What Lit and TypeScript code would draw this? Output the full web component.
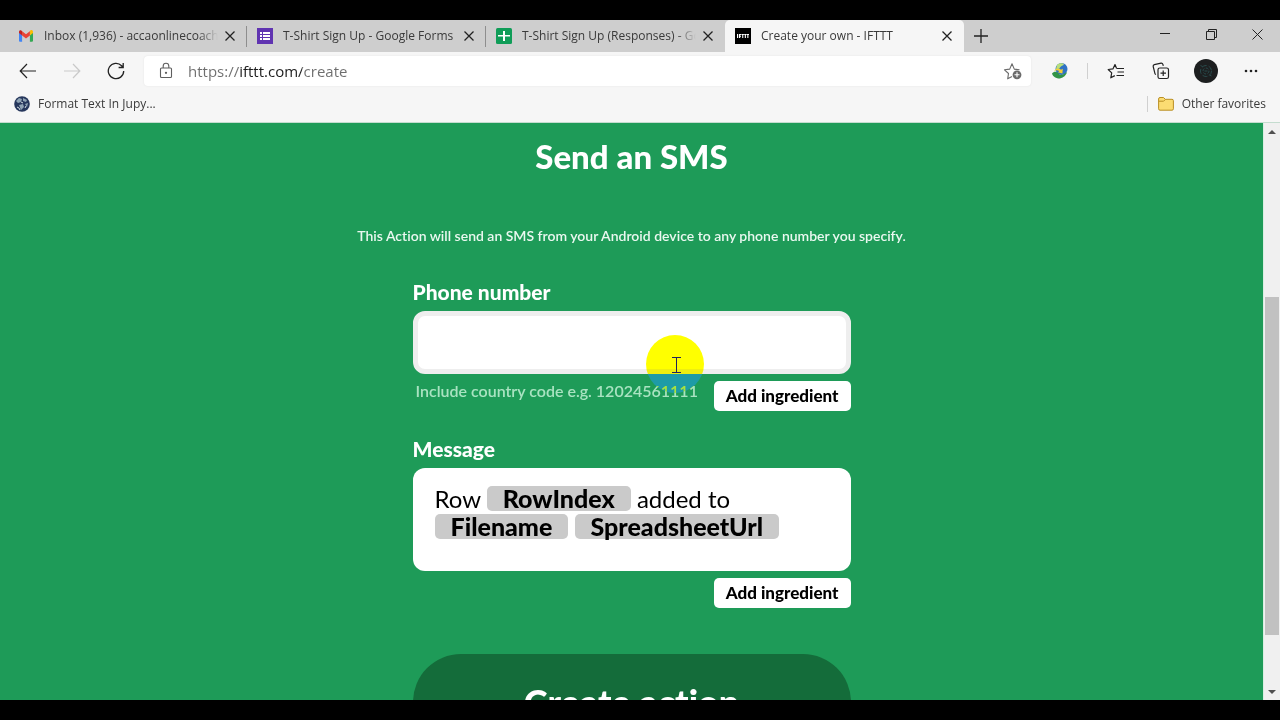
import { LitElement, html, css, svg } from "lit";
import { customElement, property } from "lit/decorators.js";

const closeIcon = html`<svg width="12" height="12" viewBox="0 0 12 12" aria-hidden="true">
  <path d="M1.5 1.5l9 9M10.5 1.5l-9 9" fill="none" stroke="currentColor" stroke-width="1.3" />
</svg>`;

const favicons: Record<string, unknown> = {
  gmail: svg`<path d="M1 3.2v9.6c0 .5.4.9.9.9h2.2V7.4z" fill="#4285f4"/>
    <path d="M15 3.2v9.6c0 .5-.4.9-.9.9h-2.2V7.4z" fill="#34a853"/>
    <path d="M11.9 3.2v4.2L15 5V3.8c0-1.6-1.7-2.2-2.7-1.4z" fill="#fbbc04"/>
    <path d="M4.1 7.4V3.2L8 6.2l3.9-3v4.2L8 10.4z" fill="#ea4335"/>
    <path d="M1 3.8V5l3.1 2.4V3.2l-.8-.7C2.4 1.8 1 2.3 1 3.8z" fill="#c5221f"/>`,
  forms: svg`<path d="M0 0h16v16H0z" fill="#6034b1"/>
    <path d="M3 4h2v2H3zM6 4h7v2H6zM3 7h2v2H3zM6 7h7v2H6zM3 10h2v2H3zM6 10h7v2H6z" fill="#fff"/>`,
  sheets: svg`<rect width="16" height="16" rx="1.5" fill="#109d58"/>
    <path d="M7 3h2v4h5v1.5H9V13H7V8.5H2V7h5z" fill="#fff"/>`,
  ifttt: svg`<path d="M0 0h16v16H0z" fill="#000"/>
    <path d="M2 6h1.2v4H2zM4 6h2.2v1H5.2v.8h.8v.9h-.8V10H4zM6.6 6h2.3v1H8.3v3H7.2V7h-.6zM9.2 6h2.2v1h-.5v3H9.8V7h-.6zM11.7 6H14v1h-.6v3h-1.1V7h-.6z" fill="#fff"/>`,
};

@customElement("browser-tab")
class BrowserTab extends LitElement {
  @property() icon = "";
  @property() label = "";
  @property({ type: Boolean, reflect: true }) active = false;
  @property({ type: Boolean, reflect: true }) faded = false;

  static styles = css`
    :host {
      display: flex;
      flex: 0 1 239px;
      min-width: 0;
      box-sizing: border-box;
      align-items: center;
      padding: 0 8px 0 10px;
      color: #3a3a3a;
      border-right: 1px solid transparent;
    }
    :host([active]) {
      background: #f6f6f6;
      border-radius: 5px 5px 0 0;
    }
    .favicon {
      flex: none;
      margin-right: 10px;
    }
    .title {
      flex: 1;
      min-width: 0;
      overflow: hidden;
      white-space: nowrap;
      font-size: 12px;
      line-height: 20px;
    }
    :host([faded]) .title {
      mask-image: linear-gradient(to right, #000 calc(100% - 20px), transparent);
    }
    .close {
      flex: none;
      display: grid;
      place-items: center;
      width: 16px;
      height: 16px;
      margin-left: 4px;
      padding: 0;
      border: 0;
      background: none;
      color: #222;
    }
  `;

  render() {
    return html`
      <svg class="favicon" width="16" height="16" viewBox="0 0 16 16" aria-hidden="true">${favicons[this.icon]}</svg>
      <span class="title">${this.label}</span>
      <button class="close" aria-label="Close tab">${closeIcon}</button>
    `;
  }
}

@customElement("browser-chrome")
class BrowserChrome extends LitElement {
  static styles = css`
    :host {
      display: block;
      flex: none;
      background: #f6f6f6;
      font-family: "Open Sans", "Noto Sans", sans-serif;
      border-bottom: 1px solid #c4dccf;
    }
    button {
      padding: 0;
      border: 0;
      background: none;
      color: #222;
      display: grid;
      place-items: center;
    }
    .tabs {
      display: flex;
      height: 32px;
      padding-left: 8px;
      background: #cecece;
    }
    .divided {
      border-image: linear-gradient(transparent 20%, #8e8e8e 20%, #8e8e8e 82%, transparent 82%) 1;
    }
    .new-tab {
      width: 34px;
    }
    .window {
      display: flex;
      margin-left: auto;
    }
    .window button {
      width: 46px;
      height: 28px;
    }
    .toolbar {
      display: flex;
      align-items: center;
      height: 38px;
      padding: 0 7px 0 6px;
    }
    .tool {
      flex: none;
      width: 44px;
      height: 32px;
    }
    .faded {
      color: #c9c9c9;
    }
    .address {
      flex: 1;
      min-width: 0;
      display: flex;
      align-items: center;
      height: 30px;
      margin: 0 7px 0 6px;
      padding: 0 8px 0 14px;
      background: #fff;
      border-radius: 4px;
      box-shadow: 0 0 2px #e2e2e2;
      box-sizing: border-box;
    }
    .url {
      flex: 1;
      min-width: 0;
      margin: 0 0 0 14px;
      padding: 0;
      border: 0;
      outline: 0;
      font: 15px/24px "Open Sans", "Noto Sans", sans-serif;
      color: transparent;
      background: linear-gradient(to right, #6d6d6d 51px, #1c1c1c 51px, #1c1c1c 114px, #6d6d6d 114px);
      background-clip: text;
      -webkit-background-clip: text;
    }
    .right {
      display: flex;
      align-items: center;
      gap: 1px;
    }
    .rule {
      width: 1px;
      height: 16px;
      background: #d0d0d0;
    }
    .right .rule {
      margin: 0 5px 0 4px;
    }
    .favorites {
      display: flex;
      align-items: center;
      justify-content: space-between;
      height: 28px;
      padding: 0 14px 4px;
    }
    .favorites a {
      display: flex;
      align-items: center;
      gap: 8px;
      color: #3a3a3a;
      text-decoration: none;
      font-size: 12px;
      line-height: 20px;
    }
    .other {
      display: flex;
      align-items: center;
      gap: 10px;
    }
  `;

  render() {
    return html`
      <nav class="tabs" aria-label="Tabs">
        <browser-tab class="divided" icon="gmail" label="Inbox (1,936) - accaonlinecoachi" faded></browser-tab>
        <browser-tab class="divided" icon="forms" label="T-Shirt Sign Up - Google Forms"></browser-tab>
        <browser-tab icon="sheets" label="T-Shirt Sign Up (Responses) - Go" faded></browser-tab>
        <browser-tab icon="ifttt" label="Create your own - IFTTT" active></browser-tab>
        <button class="new-tab" aria-label="New tab">
          <svg width="14" height="14" viewBox="0 0 14 14"><path d="M7 0v14M0 7h14" stroke="currentColor" stroke-width="1.3" /></svg>
        </button>
        <div class="window">
          <button aria-label="Minimize">
            <svg width="10" height="10" viewBox="0 0 10 10"><path d="M0 4.5h10" stroke="currentColor" /></svg>
          </button>
          <button aria-label="Restore">
            <svg width="11" height="11" viewBox="0 0 11 11" fill="none" stroke="currentColor"><path d="M.5 2.5h8v8h-8zM2.5 2.5v-2h8v8h-2" /></svg>
          </button>
          <button aria-label="Close window">
            <svg width="11" height="11" viewBox="0 0 11 11"><path d="M.5.5l10 10M10.5.5l-10 10" stroke="currentColor" /></svg>
          </button>
        </div>
      </nav>
      <div class="toolbar">
        <button class="tool" aria-label="Back">
          <svg width="18" height="16" viewBox="0 0 18 16" fill="none" stroke="currentColor" stroke-width="1.2"><path d="M17 8H1.5M8 1L1.2 8 8 15" /></svg>
        </button>
        <button class="tool faded" aria-label="Forward">
          <svg width="18" height="16" viewBox="0 0 18 16" fill="none" stroke="currentColor" stroke-width="1.2"><path d="M1 8h15.5M10 1l6.8 7L10 15" /></svg>
        </button>
        <button class="tool" aria-label="Refresh">
          <svg width="18" height="18" viewBox="0 0 18 18" fill="none" stroke="currentColor" stroke-width="1.3"><path d="M16.7 9A7.7 7.7 0 1 1 14.6 3.7L16 5.3M16.2 1v4.5h-4.6" /></svg>
        </button>
        <div class="address">
          <svg width="16" height="18" viewBox="0 0 16 18" fill="none" stroke="#5f5f5f" stroke-width="1.1" aria-hidden="true">
            <rect x="2.5" y="6" width="11" height="9.5" rx="1" />
            <path d="M5.2 6V4a2.8 2.8 0 0 1 5.6 0v2" />
            <circle cx="8" cy="10.8" r=".6" fill="#5f5f5f" />
          </svg>
          <input class="url" type="text" aria-label="Address" value="https://ifttt.com/create" />
          <button aria-label="Add to favorites">
            <svg width="20" height="18" viewBox="0 0 20 18" fill="none" stroke="#6a6a6a" stroke-width="1.1">
              <path d="M9 14.5l-4.3 2.3.8-5.3L1.5 7.8l5.2-.7L9 1.8l2.3 5.3 5.2.7" stroke-linejoin="round" />
              <circle cx="14" cy="12.8" r="4.4" fill="#6a6a6a" stroke="none" />
              <path d="M14 10.3v5M11.5 12.8h5" stroke="#fff" />
            </svg>
          </button>
        </div>
        <div class="right">
          <button class="tool" aria-label="Download manager">
            <svg width="18" height="18" viewBox="0 0 18 18">
              <circle cx="10.5" cy="7" r="6" fill="#2f73c4" />
              <path d="M6 3c2-2.5 6-2 7-.8-1 1.6-3 1.6-4 3.2S7 7.5 5 6.8z" fill="#b9df7a" />
              <path d="M1 11.5c2-2.5 5-2 6.5 0 1.5 2 4 2 8.5-1.5-1 4-4 5.5-7 6.5C5 16.5 2 15 1 11.5z" fill="#329447" />
              <path d="M3 9c2-3 5-3.2 7-1.2l1.8-1-.4 4.7-4.6-1.2 1.5-1C7 8 5 8 3 9z" fill="#f4cf35" />
            </svg>
          </button>
          <span class="rule"></span>
          <button class="tool" aria-label="Favorites">
            <svg width="18" height="18" viewBox="0 0 18 18" fill="none" stroke="currentColor" stroke-width="1.2">
              <path d="M9.5 6.2L8 2.5 5.9 6.9 1.2 7.5l3.5 3.4-.9 4.9 4-2.2M9.5 6.5h7.5M10.5 10h6.5M9.5 13.5h7.5" stroke-linejoin="round" />
            </svg>
          </button>
          <button class="tool" aria-label="Collections">
            <svg width="18" height="18" viewBox="0 0 18 18" fill="none" stroke="currentColor" stroke-width="1.2">
              <rect x="6" y="6" width="10.5" height="10.5" rx="1.8" />
              <path d="M11.2 8.5v5.5M8.5 11.2H14M3.8 12.6L3 11.8 1.2 4.5c-.2-1 .2-1.6 1.1-1.9l6.8-1.4c.9-.1 1.5.3 1.8 1.2l.4 1.4" />
            </svg>
          </button>
          <button class="tool" aria-label="Profile">
            <svg width="24" height="24" viewBox="0 0 24 24" fill="none" stroke="#2b5557" stroke-width=".8">
              <circle cx="12" cy="12" r="12" fill="#1d1f20" stroke="none" />
              <circle cx="12" cy="12" r="5.5" stroke-dasharray="5 2" />
              <circle cx="12" cy="12" r="3" stroke-dasharray="3 1.5" />
              <path d="M6.5 6.5l2 1M17.5 17l-2-1M10.5 12h3" />
            </svg>
          </button>
          <button class="tool" aria-label="Settings and more">
            <svg width="14" height="4" viewBox="0 0 14 4" fill="currentColor"><circle cx="2" cy="2" r="1.3" /><circle cx="7" cy="2" r="1.3" /><circle cx="12" cy="2" r="1.3" /></svg>
          </button>
        </div>
      </div>
      <div class="favorites">
        <a href="#">
          <svg width="16" height="16" viewBox="0 0 16 16" aria-hidden="true">
            <circle cx="8" cy="8" r="7.8" fill="#26375c" />
            <path d="M2 5l3-3 3 1-1 3-3 1zM9 2l4 2-1 2-3-1zM5 9l4-1 1 3-3 3zM11 8l3-1-1 4z" fill="#8fa3b4" />
            <path d="M3 11l2 1 1 2M7 6l2 1M11 12l1-2" stroke="#d5dde2" fill="none" />
          </svg>
          Format Text In Jupy...
        </a>
        <div class="other">
          <span class="rule"></span>
          <a href="#">
            <svg width="16" height="16" viewBox="0 0 16 16" aria-hidden="true">
              <path d="M.6 3Q.6 1.5 2 1.5h3.5l1.8 1.8H14q1.400 0 1.400 1.400v8.100q0 1.400-1.400 1.400H2q-1.400 0-1.400-1.400z" fill="#fbdc72" stroke="#b98f24" />
              <path d="M.8 5.2h4.8l1.800-1.800" fill="none" stroke="#b98f24" />
            </svg>
            Other favorites
          </a>
        </div>
      </div>
    `;
  }
}

@customElement("page-scrollbar")
class PageScrollbar extends LitElement {
  static styles = css`
    :host {
      flex: none;
      display: flex;
      flex-direction: column;
      box-sizing: border-box;
      width: 17px;
      padding: 0 1px;
      border-left: 1px solid #d9eee2;
      background: #f0f0f0;
    }
    .arrow {
      flex: none;
      display: grid;
      place-items: center;
      height: 17px;
      padding: 0;
      border: 0;
      background: none;
    }
    .before {
      flex: 157;
    }
    .thumb {
      flex: 338;
      background: #c1c1c1;
    }
    .after {
      flex: 48;
    }
  `;

  render() {
    return html`
      <button class="arrow" aria-label="Scroll up">
        <svg width="8" height="4" viewBox="0 0 8 4"><path d="M0 4l4-4 4 4z" fill="#505050" /></svg>
      </button>
      <span class="before"></span>
      <span class="thumb"></span>
      <span class="after"></span>
      <button class="arrow" aria-label="Scroll down">
        <svg width="8" height="4" viewBox="0 0 8 4"><path d="M0 0l4 4 4-4z" fill="#505050" /></svg>
      </button>
    `;
  }
}

@customElement("app-root")
class AppRoot extends LitElement {
  static styles = css`
    :host {
      display: flex;
      flex-direction: column;
      box-sizing: border-box;
      height: 100vh;
      padding: 20px 0;
      background: #000;
      overflow: hidden;
    }
    .viewport {
      flex: 1;
      min-height: 0;
      display: flex;
      background: #1e9b58;
    }
    .page {
      flex: 1;
      min-width: 0;
      overflow: hidden;
      padding-top: 13px;
      color: #fff;
      font-family: Lato, "Open Sans", sans-serif;
      font-variant-ligatures: none;
    }
    .page button {
      font-family: inherit;
      font-variant-ligatures: none;
    }
    h1 {
      margin: 0;
      text-align: center;
      font-size: 33px;
      line-height: 40px;
      font-weight: 900;
    }
    .intro {
      margin: 50px 0 0;
      text-align: center;
      font-size: 14px;
      line-height: 20px;
      font-weight: 600;
      color: #eaf8f0;
    }
    form {
      max-width: 438px;
      margin: 33px auto 0;
    }
    .label {
      display: block;
      margin-bottom: 6px;
      font-size: 21px;
      line-height: 26px;
      font-weight: 900;
    }
    .field {
      position: relative;
    }
    .phone {
      display: block;
      box-sizing: border-box;
      width: 100%;
      height: 63px;
      padding: 0 18px;
      border: 5px solid #eee;
      border-radius: 12px;
      outline: 0;
      background: #fff;
      font: 24px/28px Lato, sans-serif;
    }
    .below {
      display: flex;
      align-items: flex-start;
      justify-content: space-between;
      margin-top: 7px;
    }
    .end {
      justify-content: flex-end;
    }
    .hint {
      padding-left: 3px;
      font-size: 16px;
      line-height: 20px;
      font-weight: 600;
      color: #a9e3c1;
    }
    .ingredient {
      height: 30px;
      padding: 0 12px;
      border: 0;
      border-radius: 5px;
      background: #fff;
      color: #000;
      font-size: 17px;
      line-height: 20px;
      font-weight: 900;
    }
    .message-label {
      margin-top: 25px;
    }
    .message {
      box-sizing: border-box;
      min-height: 103px;
      padding: 17px 22px;
      border-radius: 12px;
      outline: 0;
      background: #fff;
      color: #000;
      font-size: 24px;
      line-height: 28px;
    }
    .token {
      display: inline-block;
      padding: 0 16px;
      border-radius: 5px;
      background: #cacaca;
      font-size: 25px;
      line-height: 25px;
      font-weight: 900;
    }
    .create {
      display: block;
      width: 100%;
      height: 96px;
      margin-top: 46px;
      border: 0;
      border-radius: 48px;
      background: #146c3a;
      color: #fff;
      font-size: 36px;
      line-height: 44px;
      font-weight: 900;
    }
    .pointer {
      position: absolute;
      left: 233px;
      top: 24px;
      width: 58px;
      height: 58px;
      border-radius: 50%;
      background: #00f;
      mix-blend-mode: difference;
      pointer-events: none;
    }
    .caret {
      position: absolute;
      left: 258px;
      top: 45px;
      pointer-events: none;
    }
  `;

  render() {
    return html`
      <browser-chrome></browser-chrome>
      <div class="viewport">
        <main class="page">
          <h1>Send an SMS</h1>
          <p class="intro">This Action will send an SMS from your Android device to any phone number you specify.</p>
          <form>
            <label class="label" for="phone">Phone number</label>
            <div class="field">
              <input class="phone" id="phone" type="tel" />
              <div class="below">
                <span class="hint">Include country code e.g. 12024561111</span>
                <button class="ingredient" type="button">Add ingredient</button>
              </div>
              <span class="pointer"></span>
              <svg class="caret" width="11" height="18" viewBox="0 0 11 18" aria-hidden="true">
                <path d="M1 1.5h9M5.5 1.5v15M1 16.5h9" fill="none" stroke="#22225a" />
              </svg>
            </div>
            <span class="label message-label" id="message-label">Message</span>
            <div class="message" role="textbox" aria-multiline="true" aria-labelledby="message-label" contenteditable="true">Row <span class="token">RowIndex</span> added to <span class="token">Filename</span> <span class="token">SpreadsheetUrl</span></div>
            <div class="below end">
              <button class="ingredient" type="button">Add ingredient</button>
            </div>
            <button class="create" type="button">Create action</button>
          </form>
        </main>
        <page-scrollbar></page-scrollbar>
      </div>
    `;
  }
}
